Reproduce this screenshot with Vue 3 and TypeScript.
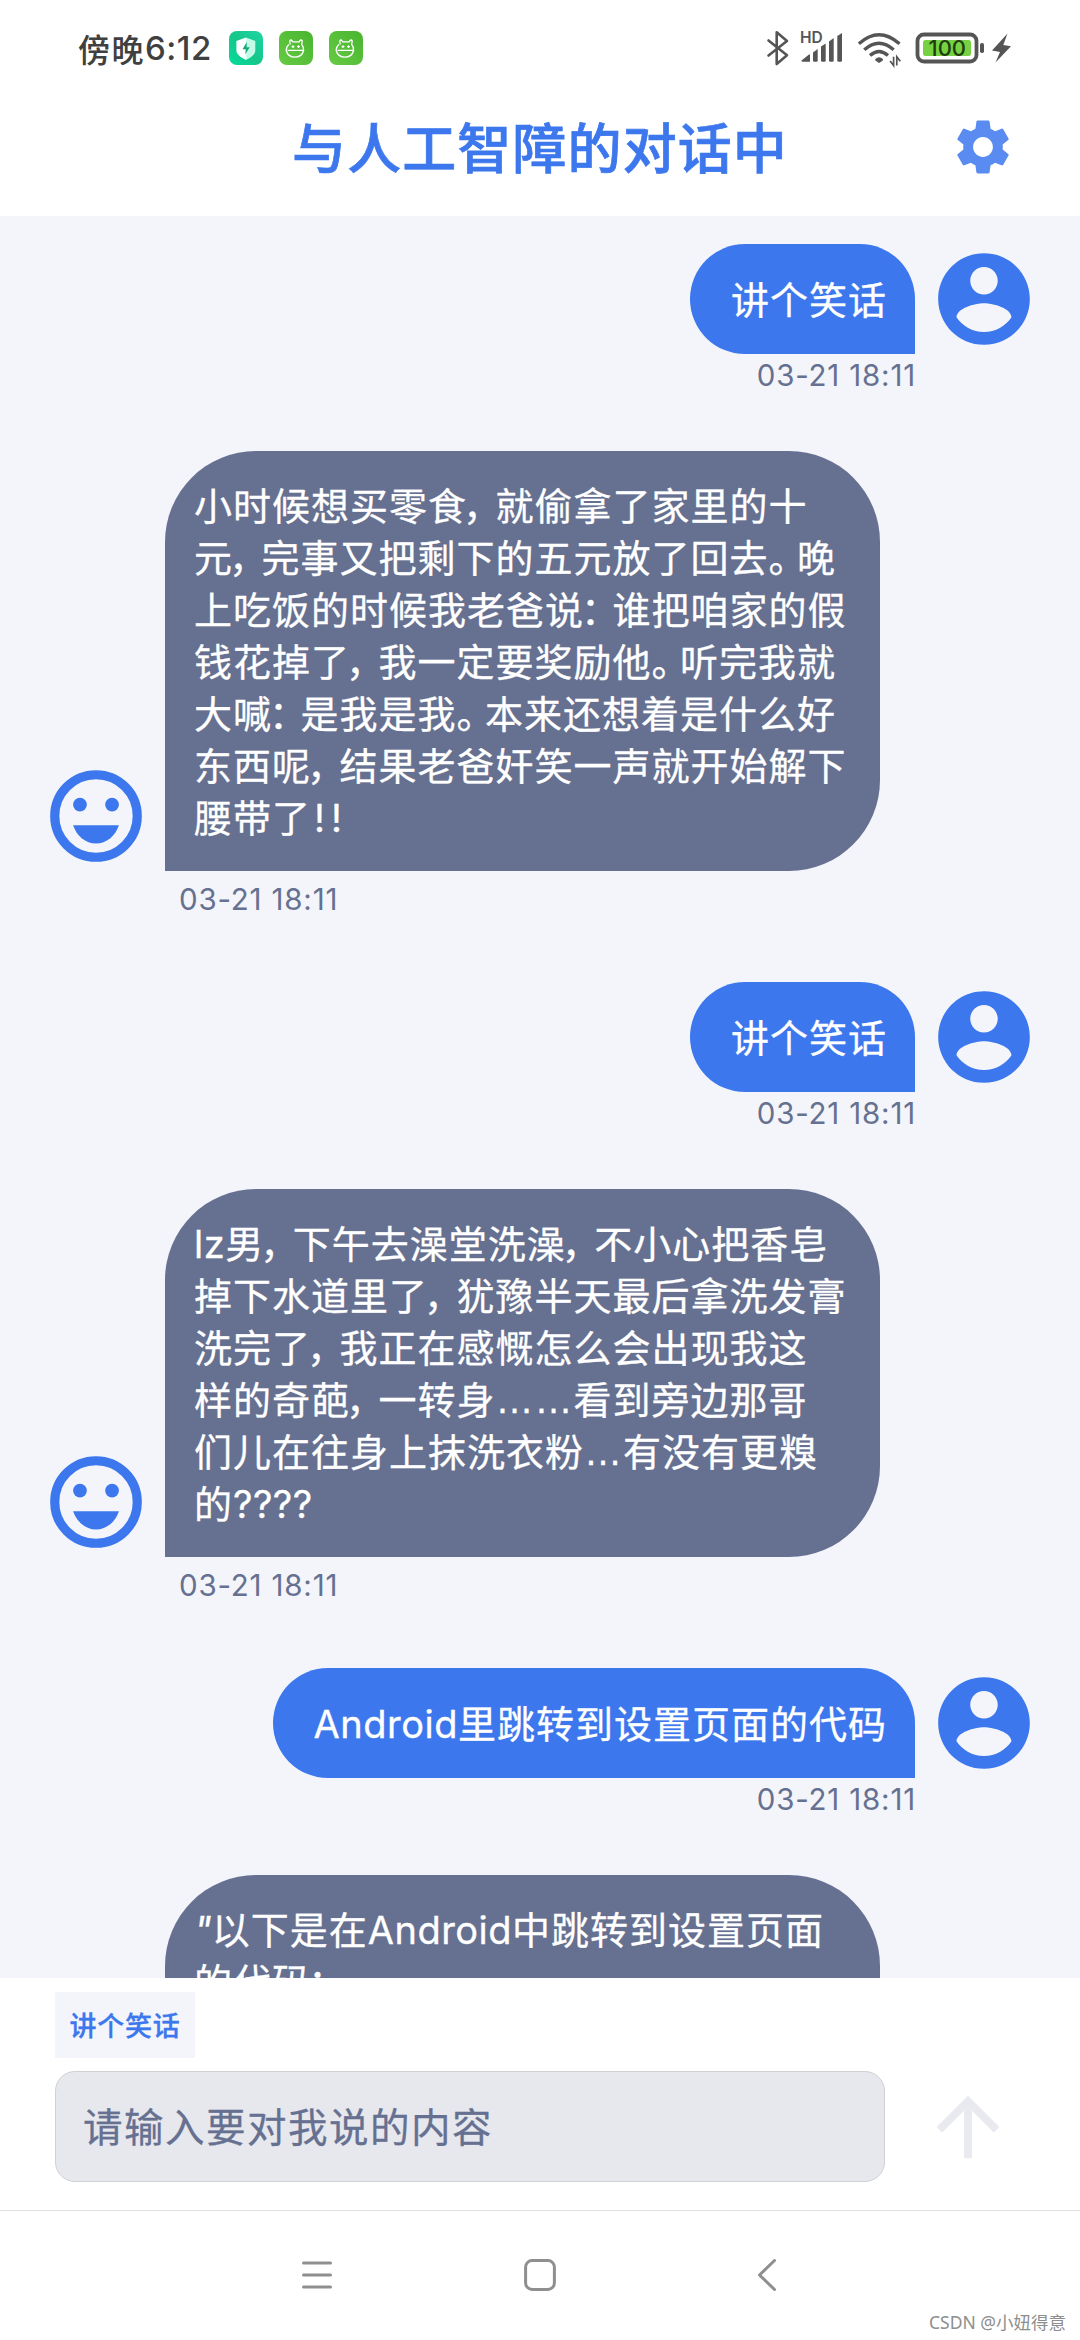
<script setup lang="ts">
type Role = 'user' | 'bot'
interface Message {
  id: number
  role: Role
  lines: string[]
  time: string
  long?: boolean
}
interface Piece {
  text: string
  kind: string
}

const messages: Message[] = [
  { id: 1, role: 'user', lines: ['讲个笑话'], time: '03-21 18:11' },
  {
    id: 2,
    role: 'bot',
    lines: [
      '小时候想买零食，就偷拿了家里的十',
      '元，完事又把剩下的五元放了回去。晚',
      '上吃饭的时候我老爸说：谁把咱家的假',
      '钱花掉了，我一定要奖励他。听完我就',
      '大喊：是我是我。本来还想着是什么好',
      '东西呢，结果老爸奸笑一声就开始解下',
      '腰带了!!',
    ],
    time: '03-21 18:11',
  },
  { id: 3, role: 'user', lines: ['讲个笑话'], time: '03-21 18:11' },
  {
    id: 4,
    role: 'bot',
    lines: [
      'lz男，下午去澡堂洗澡，不小心把香皂',
      '掉下水道里了，犹豫半天最后拿洗发膏',
      '洗完了，我正在感慨怎么会出现我这',
      '样的奇葩，一转身……看到旁边那哥',
      '们儿在往身上抹洗衣粉…有没有更糗',
      '的????',
    ],
    time: '03-21 18:11',
  },
  { id: 5, role: 'user', lines: ['Android里跳转到设置页面的代码'], time: '03-21 18:11' },
  {
    id: 6,
    role: 'bot',
    lines: ['"以下是在Android中跳转到设置页面', '的代码：'],
    time: '03-21 18:11',
    long: true,
  },
]

// Full-width punctuation is set narrower than an ideograph, so each line is split into runs.
function pieces(line: string): Piece[] {
  const runs = line.match(/[，。：]|…|"|!+|[#-~]+|[^，。：…!-~]+/g) ?? []
  return runs.map((text): Piece => {
    if (text === '，') return { text, kind: 'punct comma' }
    if (text === '：') return { text, kind: 'punct colon' }
    if (text === '。') return { text, kind: 'punct' }
    if (text === '…') return { text, kind: 'dots' }
    if (text === '"') return { text, kind: 'quote' }
    if (text.startsWith('!')) return { text, kind: 'bang' }
    if (/^[#-~]+$/.test(text)) return { text, kind: 'latin' }
    return { text, kind: 'text' }
  })
}

const quickReplies: string[] = ['讲个笑话']
</script>

<template>
  <div class="screen">
    <header class="status">
      <div class="clock"><span>傍晚</span><span class="digits">6:12</span></div>
      <svg class="app-icon" viewBox="0 0 34 34">
        <defs>
          <linearGradient id="guard" x1="0" y1="1" x2="1" y2="0">
            <stop offset="0" stop-color="#02dc9c" />
            <stop offset=".5" stop-color="#16c68a" />
            <stop offset="1" stop-color="#1fd6a5" />
          </linearGradient>
        </defs>
        <rect width="34" height="34" rx="8" fill="url(#guard)" />
        <path d="M17 6.5 26.3 10v9.500c0 4-4.300 7-9.300 9.500z" fill="#c2fbe6" />
        <path d="M17 6.500 7.400 10v9.500c0 4 4.600 7 9.600 9.500z" fill="#fff" />
        <path d="M17.800 11 13.500 18.300h3.300L16.200 23.300 20.800 16.200h-3.200z" fill="#16a87a" />
      </svg>
      <svg v-for="n in 2" :key="n" class="app-icon" viewBox="0 0 34 34">
        <defs>
          <linearGradient :id="'bot' + n" x1="0" y1="1" x2="1" y2="0">
            <stop offset="0" stop-color="#66ca44" />
            <stop offset="1" stop-color="#48b52e" />
          </linearGradient>
        </defs>
        <rect width="34" height="34" rx="8" :fill="`url(#bot${n})`" />
        <path
          d="M11.200 13.500 10.800 9.800q1-1.600 2.300 0l.5 1h6.600l.6-1q1.400-1.600 2.400 0l-.5 3.700q1.900 2 1.900 6-1.600 6.600-8.700 6.600t-8.700-6.600q0-4 2.800-6M8.600 19.400h16.400"
          fill="none"
          stroke="#fff"
          stroke-width="1.300"
          stroke-linejoin="round"
        />
        <path d="M14 14.200v2.800M12.600 15.600h2.800M19.500 14.200v2.800M18.100 15.600h2.800" stroke="#fff" stroke-width="1.100" />
      </svg>

      <div class="indicators">
        <svg viewBox="765 29 250 40" class="signals">
          <path
            d="M768.500 41.500 787 56.300 776.700 65V33.200L787 42 768.500 56.500"
            fill="none"
            stroke="#555"
            stroke-width="2.600"
            stroke-linejoin="round"
            stroke-linecap="round"
          />
          <text x="800" y="44" class="hd">HD</text>
          <g fill="#555">
            <path d="M801.500 61.500 809 55.500q1-.5 1 .8v6.500h-7.500q-1 0-1-1.300z" />
            <path d="M813 53.500 817.700 50v11.500q0 1.300-1.300 1.300h-2q-1.400 0-1.400-1.300z" />
            <path d="M821 47.500 825.700 44.500v17q0 1.300-1.300 1.300h-2q-1.400 0-1.400-1.300z" />
            <path d="M829 42.500 833.700 39v22.500q0 1.300-1.300 1.300h-2q-1.400 0-1.400-1.300z" />
            <path d="M837.300 37 842 34v27.500q0 1.300-1.300 1.300h-2q-1.400 0-1.400-1.300z" />
          </g>
          <g fill="none" stroke="#555" stroke-width="3.400">
            <path d="M858.900 44.800q20-18 40.600 0" />
            <path d="M864.300 50.700q14.700-13 29.400 0" />
            <path d="M870 56.500q9-8 18 0" />
          </g>
          <path d="M875.300 60q3.800-3.400 7.600 0v1.500L879 64l-3.700-2.500z" fill="#555" />
          <path d="M893.600 57.800V66.500l-3.500-4.500M896.800 66.500V57.800l3.500 4.500" fill="none" stroke="#555" stroke-width="1.700" />
          <rect x="917.500" y="35.500" width="59" height="27" rx="6.500" fill="#fff" stroke="#555" stroke-width="3.800" />
          <rect x="923" y="41" width="48" height="16" rx="2.500" fill="#76d243" />
          <text x="947.300" y="57.300" class="level">100</text>
          <rect x="980" y="44" width="4" height="10" rx="1.800" fill="#555" />
          <path d="M1007.500 34.600 992 51.500l8 1.500-4.500 10.500L1011 47.300l-7.700-1.300z" fill="#555" />
        </svg>
      </div>
    </header>

    <div class="titlebar">
      <h1>与人工智障的对话中</h1>
      <svg class="gear" viewBox="0 0 24 24">
        <path
          fill="#5a8bf0"
          d="M19.14 12.94c.04-.3.06-.61.06-.94 0-.32-.02-.64-.07-.94l2.030-1.580c.18-.14.23-.41.12-.61l-1.920-3.320c-.12-.22-.37-.29-.59-.22l-2.390.96c-.5-.38-1.030-.7-1.620-.94L14.400 2.810c-.04-.24-.24-.41-.48-.41h-3.840c-.24 0-.43.17-.47.41L9.250 5.350C8.660 5.590 8.120 5.920 7.630 6.290L5.240 5.330c-.22-.08-.47 0-.59.22L2.740 8.870c-.12.21-.08.47.12.61l2.030 1.580c-.05.3-.09.63-.09.94s.02.64.07.94l-2.030 1.580c-.18.14-.23.41-.12.61l1.920 3.320c.12.22.37.29.59.22l2.390-.96c.5.38 1.030.7 1.620.94l.36 2.540c.05.24.24.41.48.41h3.840c.24 0 .44-.17.47-.41l.36-2.540c.59-.24 1.130-.56 1.620-.94l2.390.96c.22.08.47 0 .59-.22l1.920-3.320c.12-.22.07-.47-.12-.61L19.140 12.940zM12 15.600c-1.980 0-3.600-1.620-3.600-3.600s1.620-3.600 3.600-3.600 3.600 1.620 3.600 3.600-1.620 3.600-3.600 3.600z"
        />
      </svg>
    </div>

    <main class="chat">
      <section v-for="m in messages" :key="m.id" class="message" :class="[m.role, { long: m.long }]">
        <div class="row">
          <svg v-if="m.role === 'bot'" class="avatar" viewBox="0 0 24 24">
            <circle cx="12" cy="12" r="9" fill="none" stroke="#3c77ed" stroke-width="2" />
            <circle cx="8.500" cy="9.500" r="1.500" />
            <circle cx="15.500" cy="9.500" r="1.500" />
            <path d="M12 18c2.280 0 4.220-1.660 5-4H7c.78 2.340 2.720 4 5 4z" />
          </svg>
          <div class="bubble">
            <p v-for="(line, i) in m.lines" :key="i">
              <span v-for="(p, j) in pieces(line)" :key="j" :class="p.kind">{{ p.text }}</span>
            </p>
          </div>
          <svg v-if="m.role === 'user'" class="avatar" viewBox="0 0 24 24">
            <path
              d="M12 2C6.480 2 2 6.480 2 12s4.480 10 10 10 10-4.480 10-10S17.520 2 12 2zm0 3c1.660 0 3 1.340 3 3s-1.340 3-3 3-3-1.340-3-3 1.340-3 3-3zm0 14.200c-2.500 0-4.710-1.280-6-3.220.03-1.990 4-3.080 6-3.080 1.990 0 5.970 1.090 6 3.080-1.290 1.940-3.500 3.220-6 3.220z"
            />
          </svg>
        </div>
        <time>{{ m.time }}</time>
      </section>
    </main>

    <footer class="composer">
      <div class="chips">
        <button v-for="q in quickReplies" :key="q" class="chip">{{ q }}</button>
      </div>
      <div class="entry">
        <div class="field">请输入要对我说的内容</div>
        <svg class="send" viewBox="0 0 24 24">
          <path fill="#e9eaf0" d="M4 12l1.410 1.410L11 7.830V20h2V7.830l5.580 5.590L20 12l-8-8-8 8z" />
        </svg>
      </div>
    </footer>

    <nav class="navbar">
      <svg class="nav-menu" width="30" height="32" viewBox="0 0 30 32">
        <path d="M1.500 4h27M1.500 16h27M1.500 28h27" />
      </svg>
      <svg class="nav-home" width="32" height="32" viewBox="0 0 32 32">
        <rect x="1.600" y="1.600" width="28.800" height="28.800" rx="6.500" />
      </svg>
      <svg class="nav-back" width="20" height="34" viewBox="0 0 20 34">
        <path d="M17.500 2.500 2.500 17l15 14.500" />
      </svg>
      <span class="watermark">CSDN @小妞得意</span>
    </nav>
  </div>
</template>

<style>
body {
  margin: 0;
  background: #fff;
}
</style>

<style scoped>
.screen {
  width: 1080px;
  height: 2340px;
  overflow: hidden;
  display: flex;
  flex-direction: column;
  background: #fff;
  font-family: Inter, 'Noto Sans CJK SC', sans-serif;
}

.status {
  height: 96px;
  display: flex;
  align-items: center;
  padding-left: 78px;
  box-sizing: border-box;
}
.clock {
  width: 151px;
  display: flex;
  align-items: center;
  font-size: 32px;
  font-weight: 500;
  letter-spacing: 1.500px;
  color: #404040;
  white-space: nowrap;
}
.digits {
  font-size: 33px;
  letter-spacing: 0.500px;
}
.app-icon {
  width: 34px;
  height: 34px;
  margin-right: 16px;
}
.indicators {
  margin-left: auto;
  padding-right: 65px;
  display: flex;
}
.signals {
  width: 250px;
  height: 40px;
}
.hd {
  font-size: 15.500px;
  font-weight: 600;
  fill: #555;
}
.level {
  font-size: 22px;
  font-weight: 500;
  text-anchor: middle;
  fill: #223c12;
}

.titlebar {
  height: 120px;
  display: grid;
  grid-template-columns: 1fr 66px;
  padding-right: 64px;
  box-sizing: border-box;
}
h1 {
  margin: 0;
  padding-left: 130px;
  text-align: center;
  font-size: 54px;
  line-height: 108px;
  font-weight: 500;
  letter-spacing: 1.100px;
  color: #3c77ed;
  -webkit-text-stroke: 0.700px #3c77ed;
}
.gear {
  width: 66px;
  height: 66px;
  margin-top: 18px;
}

.chat {
  height: 1762px;
  overflow: hidden;
  background: #f3f5fa;
  padding: 28px 41px 0;
  box-sizing: border-box;
}
.message {
  display: flex;
  flex-direction: column;
}
.row {
  display: flex;
  align-items: flex-end;
  gap: 14px;
}
.avatar {
  width: 110px;
  height: 110px;
  flex: none;
  fill: #3c77ed;
}
.bubble {
  box-sizing: border-box;
  color: #fff;
  font-size: 38px;
  line-height: 52px;
  letter-spacing: 1px;
  -webkit-text-stroke: 0.300px #fff;
}
.bubble p {
  margin: 0;
  white-space: nowrap;
}
.punct,
.dots {
  display: inline-block;
  width: 28.500px;
  height: 52px;
  vertical-align: top;
}
.comma {
  text-indent: -4px;
}
.colon {
  text-indent: -3px;
}
.dots {
  width: 39px;
  letter-spacing: 0;
  font-family: 'Liberation Sans', sans-serif;
}
.latin {
  letter-spacing: 0.500px;
}
.bang {
  letter-spacing: 6px;
  padding-left: 3px;
}
.quote {
  font-style: italic;
  letter-spacing: 0;
}
.bot .bubble {
  width: 715px;
  padding: 29px 0 27px 29px;
  border-radius: 91px 91px 91px 0;
  background: #667090;
}
.long .bubble {
  min-height: 420px;
}
.user .row {
  justify-content: flex-end;
}
.user .bubble {
  height: 110px;
  padding: 30px 28px 28px 41px;
  border-radius: 55px 55px 0 55px;
  background: #3c77ed;
}
time {
  font-size: 29.500px;
  line-height: 36px;
  letter-spacing: 0.800px;
  color: #667090;
}
.user time {
  align-self: flex-end;
  margin: 3px 123px 58px 0;
}
.bot time {
  margin: 10px 0 65px 138px;
}

.composer {
  height: 232px;
  padding: 14px 0 0 55px;
  box-sizing: border-box;
}
.chips {
  display: flex;
  height: 79px;
}
.chip {
  width: 140px;
  height: 66px;
  padding: 3px 0 0;
  border: 0;
  background: #f3f5fa;
  color: #3c77ed;
  font: 500 27px/63px Inter, 'Noto Sans CJK SC', sans-serif;
  letter-spacing: 0.800px;
  white-space: nowrap;
  -webkit-text-stroke: 0.300px #3c77ed;
}
.entry {
  display: flex;
  align-items: center;
}
.field {
  width: 830px;
  height: 111px;
  box-sizing: border-box;
  padding-left: 27px;
  border: 1px solid #d0d1d4;
  border-radius: 20px;
  background: #e7e8ee;
  color: #667090;
  font-size: 39.500px;
  line-height: 112px;
  letter-spacing: 1.500px;
  -webkit-text-stroke: 0.300px #667090;
}
.send {
  width: 94px;
  height: 94px;
  margin-left: 36px;
}

.navbar {
  position: relative;
  height: 130px;
  box-sizing: border-box;
  border-top: 1px solid #e0e0e0;
  display: flex;
  align-items: center;
  padding: 0 0 2px 302px;
}
.navbar svg {
  fill: none;
  stroke: #8f8f8f;
  stroke-width: 3;
  stroke-linecap: round;
  stroke-linejoin: round;
}
.nav-home {
  margin-left: 192px;
}
.nav-back {
  margin-left: 201px;
}
.watermark {
  position: absolute;
  right: 14px;
  bottom: 5px;
  font: 17.500px/26px 'Noto Sans', 'Noto Sans CJK SC', sans-serif;
  color: #8e8e8e;
  text-shadow: -1px -1px 0 #fff;
}
</style>
